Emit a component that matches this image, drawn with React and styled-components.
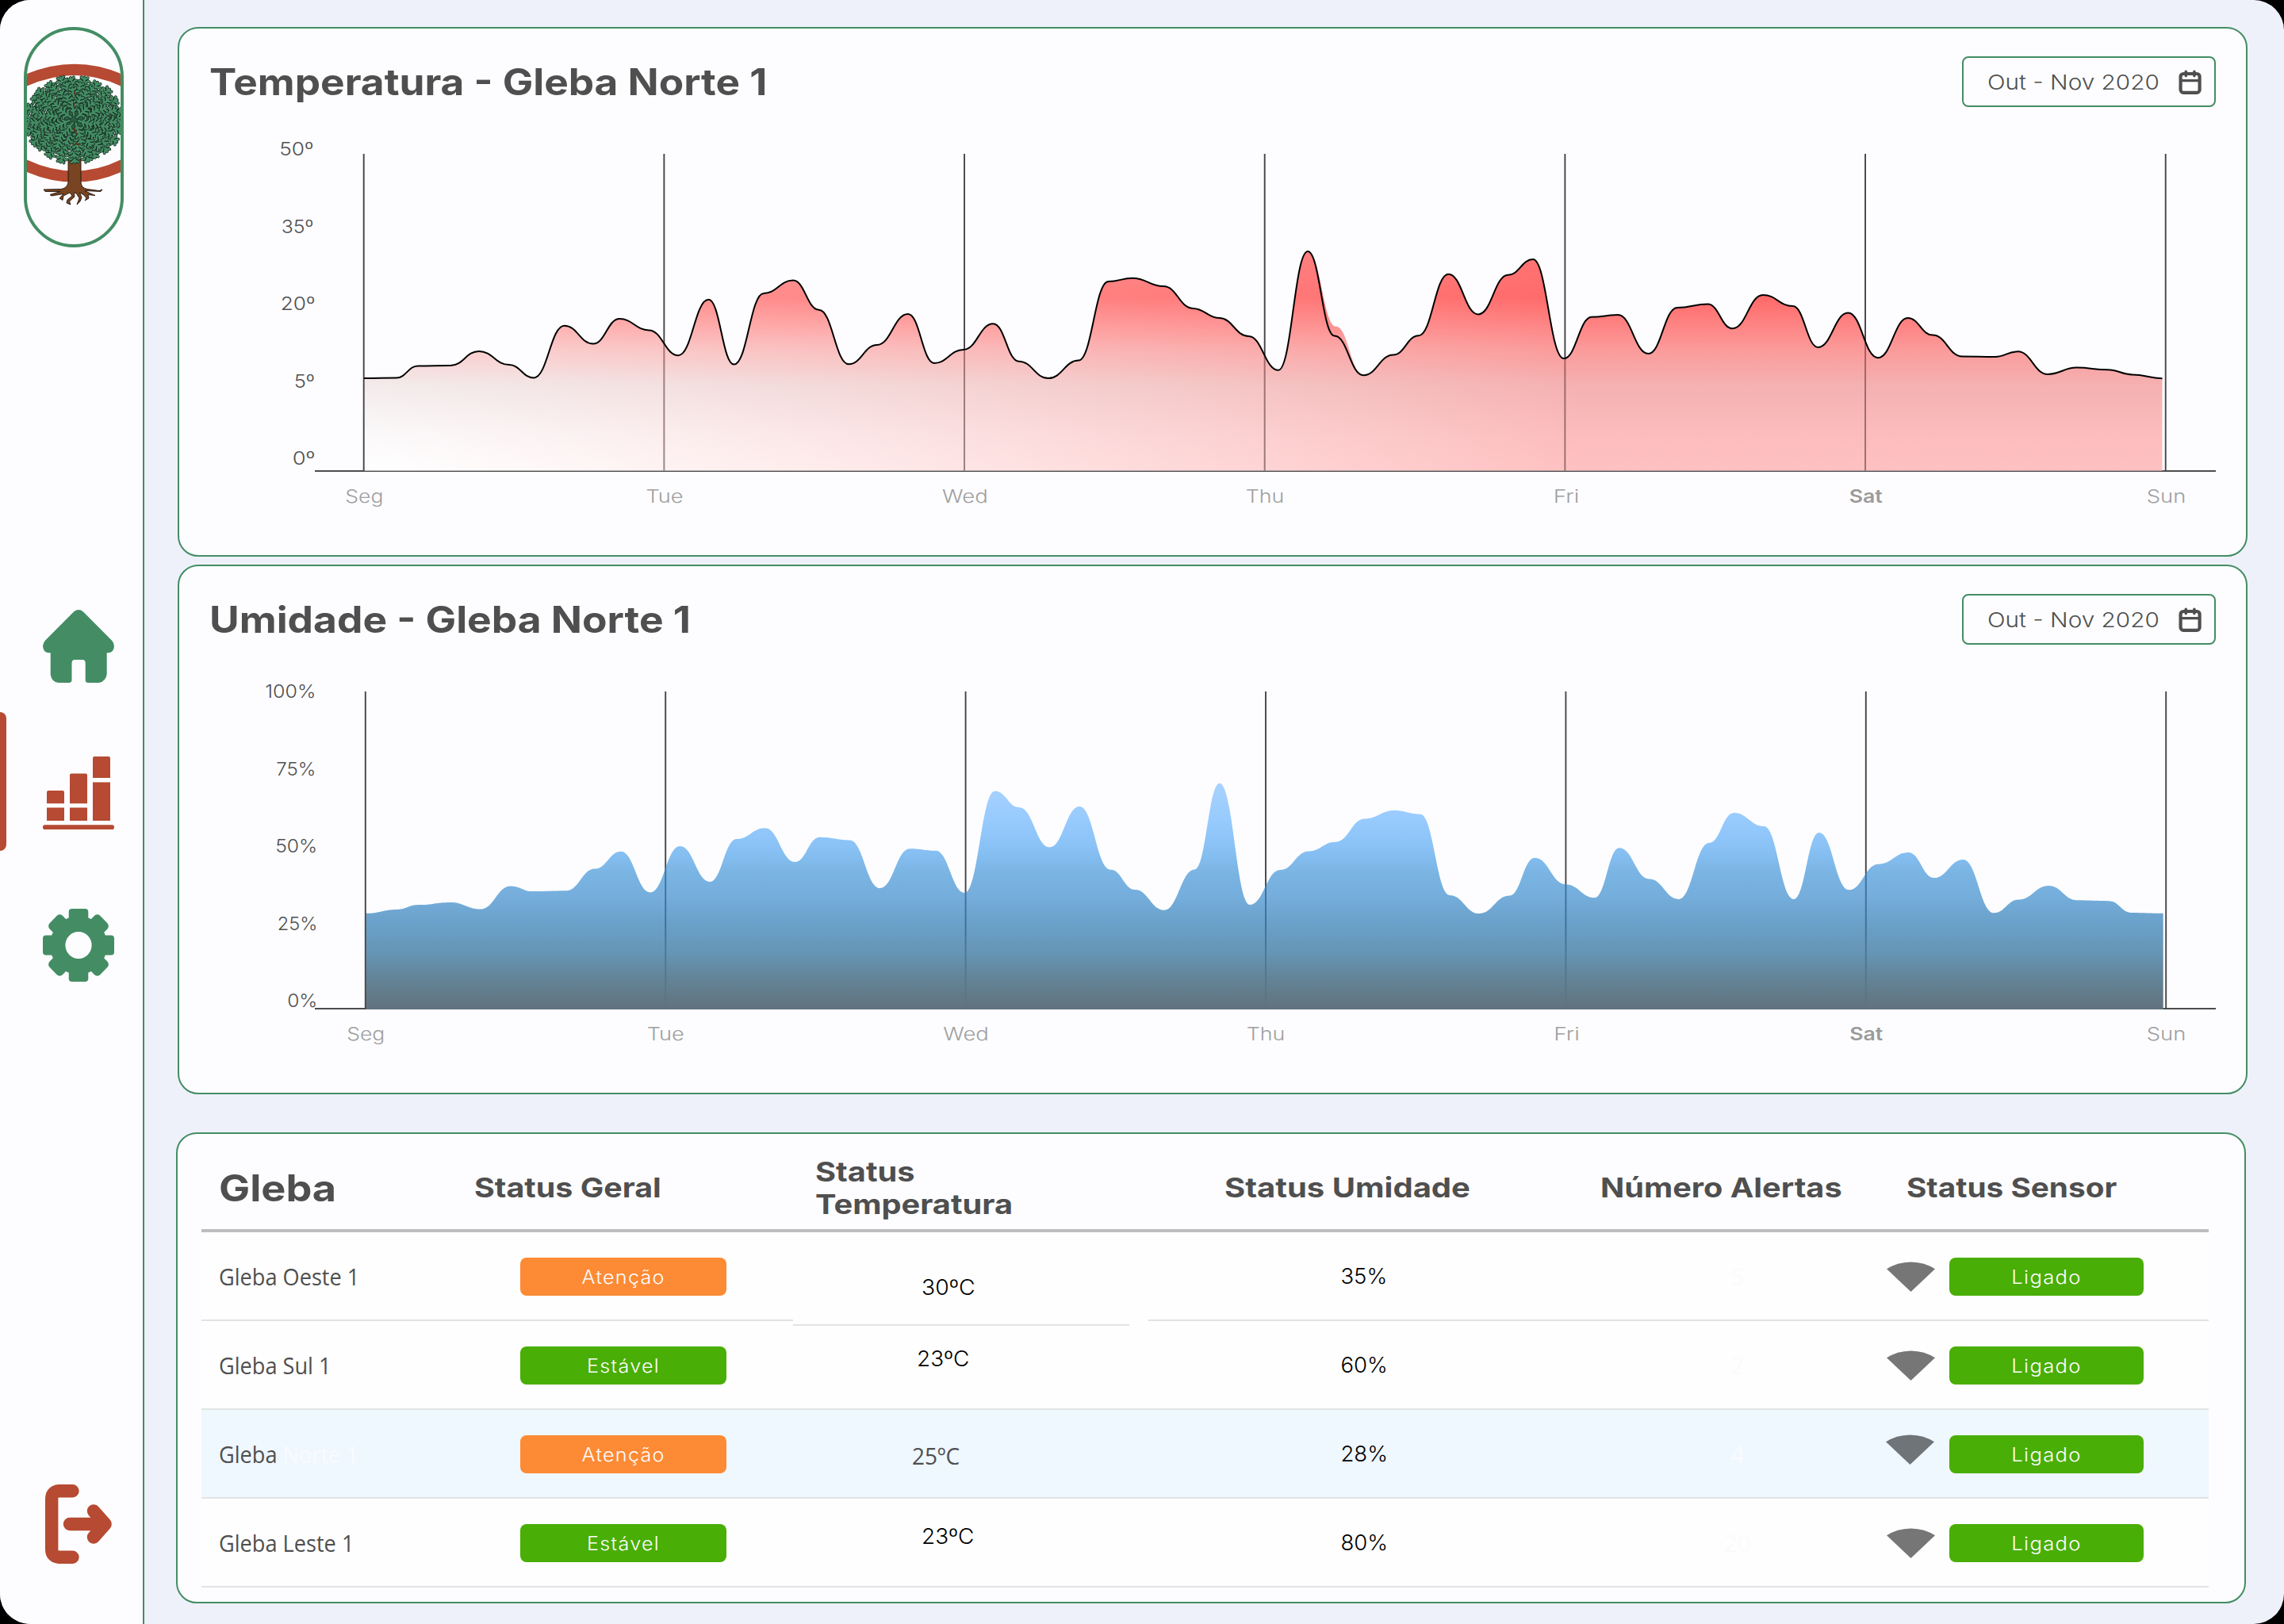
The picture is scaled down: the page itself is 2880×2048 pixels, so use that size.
import React from "react";
import styled, { createGlobalStyle, css } from "styled-components";

const GREEN = "#448d64";
const RED = "#b64a32";
const INK = "#4f4f4f";

const GlobalStyle = createGlobalStyle`
  html, body { margin: 0; padding: 0; background: #000; }
  body { font-family: Inter, "Liberation Sans", sans-serif; color: ${INK}; }
  *, *::before, *::after { box-sizing: border-box; }
  svg { display: block; flex: none; }
`;

/* ---------- page ---------- */

const Page = styled.div`
  display: flex;
  width: 2880px;
  height: 2048px;
  border-radius: 38px;
  overflow: hidden;
  background: #eef1fa;
`;

const Sidebar = styled.aside`
  display: flex;
  flex-direction: column;
  flex: none;
  width: 182px;
  padding-top: 34px;
  background: #fdfdff;
  border-right: 2px solid ${GREEN};
`;

const LogoFrame = styled.div`
  width: 126px;
  height: 278px;
  margin-left: 30px;
  border: 4px solid ${GREEN};
  border-radius: 63px;
  overflow: hidden;
`;

const Nav = styled.nav`
  display: flex;
  flex-direction: column;
  flex: 1;
  padding-top: 457px;
`;

const NavItem = styled.a`
  display: flex;
  align-items: flex-start;
  height: ${(p) => p.$height}px;
  margin-bottom: ${(p) => p.$after}px;
  padding-left: ${(p) => (p.$active ? 0 : p.$left || 54)}px;
  color: ${(p) => (p.$red ? RED : GREEN)};
`;

const ActiveMark = styled.span`
  width: 8px;
  height: 100%;
  margin-right: 46px;
  border-radius: 0 8px 8px 0;
  background: ${RED};
`;

const ActiveIcon = styled.span`
  padding-top: 56px;
`;

const Main = styled.main`
  display: flex;
  flex-direction: column;
  flex: 1;
  padding: 34px 46px 0 42px;
`;

/* ---------- shared text ---------- */

const Wide = styled.span`
  display: inline-block;
  transform: scaleX(${(p) => p.$x || 1});
  transform-origin: ${(p) => (p.$center ? "50%" : "0")} 50%;
  white-space: pre;
`;

/* ---------- chart cards ---------- */

const Card = styled.section`
  display: flex;
  flex-direction: column;
  flex: none;
  width: 2610px;
  height: 668px;
  margin-bottom: 10px;
  border: 2px solid ${GREEN};
  border-radius: 26px;
  background: #fdfdff;
  overflow: hidden;
`;

const CardHeader = styled.header`
  display: flex;
  align-items: center;
  justify-content: space-between;
  flex: none;
  padding: 35px 38px 0 38px;
`;

const CardTitle = styled.h2`
  margin: 0;
  font-size: 46px;
  font-weight: 700;
  line-height: 56px;
`;

const DateButton = styled.button`
  display: flex;
  align-items: center;
  justify-content: space-between;
  width: 320px;
  height: 64px;
  padding: 1px 15px 0 30px;
  border: 2px solid ${GREEN};
  border-radius: 8px;
  background: transparent;
  color: ${INK};
  font: 350 26px/40px Inter, "Liberation Sans", sans-serif;
`;

/* ---------- table ---------- */

const TableCard = styled(Card)`
  height: 594px;
  margin: 38px 0 0 -2px;
  padding-left: 30px;
`;

const HeadRow = styled.div`
  display: grid;
  grid-template-columns: 340px 406px 448px 544px 380px 413px;
  align-items: center;
  width: 2531px;
  height: 124px;
  padding-top: 17px;
  border-bottom: 4px solid #bdbdbd;
`;

const HeadCell = styled.div`
  padding-left: ${(p) => p.$pad}px;
  font-size: ${(p) => (p.$big ? 46 : 34.5)}px;
  font-weight: 700;
  line-height: 40.5px;
`;

const Row = styled.div`
  display: grid;
  grid-template-columns: 340px 406px 424px 24px 544px 380px 413px;
  width: 2531px;
  height: 112px;
  background: ${(p) => (p.$selected ? "#eff7ff" : "#fefefe")};
`;

const Cell = styled.div`
  display: flex;
  align-items: center;
  height: 112px;
  padding-top: 2px;
  padding-left: ${(p) => p.$pad || 0}px;
  border-bottom: 2px solid #e2e3e4;
  ${(p) =>
    p.$center &&
    css`
      justify-content: center;
    `}
`;

const Gap = styled.div`
  height: 112px;
  border-bottom: 2px solid ${(p) => (p.$open ? "transparent" : "#e2e3e4")};
`;

const TempCell = styled(Cell)`
  position: relative;
  z-index: 1;
  align-items: flex-start;
  padding-top: ${(p) => p.$top}px;
  ${(p) =>
    p.$low &&
    css`
      height: 118px;
      background: #fefefe;
    `}
`;

const Name = styled.span`
  font: 400 29.5px/40px "Open Sans", "Noto Sans", sans-serif;
  color: ${INK};
  white-space: pre;
`;

const Faint = styled.span`
  color: ${(p) => (p.$selected ? "#f9fbff" : "#fbfbfb")};
`;

const Value = styled.span`
  font-size: 27px;
  font-weight: 350;
  line-height: 40px;
  color: #000;
`;

const Badge = styled.span`
  display: flex;
  align-items: center;
  justify-content: center;
  width: ${(p) => p.$width}px;
  height: 48px;
  border-radius: 8px;
  background: ${(p) => (p.$warn ? "#fd8a34" : "#49ae05")};
  color: #fdfdff;
  font-size: 23.5px;
  font-weight: 350;
  letter-spacing: 1.2px;
`;

const Signal = styled.span`
  margin: ${(p) => (p.$raised ? "-12px 19px 0 -1px" : "0 18px 0 0")};
  color: ${(p) => (p.$raised ? "#6f7478" : "#767676")};
`;

/* ---------- icons ---------- */

const NavIcon = styled.svg.attrs({
  width: 90,
  height: 92,
  preserveAspectRatio: "none",
  fill: "currentColor",
})``;

const HomeIcon = () => (
  <NavIcon viewBox="0 0 90 86">
    <path d="M39 2.3Q45-2.3 51 2.3L87.3 36.4Q90 39.5 90 43Q89.5 50 83 50.7H80.7V76Q79.5 84.5 71 86H57Q53.7 86 53.7 82.5V63Q53.7 59 50 59H40.5Q36.5 59 36.5 63V82.5Q36.5 86 33 86H19.5Q11 85 9.7 76.5V50.7H7Q.5 50 0 43Q0 39.5 2.7 36.4Z" />
  </NavIcon>
);

const BarsIcon = () => (
  <NavIcon viewBox="0 0 90 86">
    <path d="M5 55.3V42.3Q5 40.3 7 40.3H25Q27 40.3 27 42.3V55.3ZM5 60.3H27V75.7H5Z" />
    <path d="M34 55.3V22Q34 20 36 20H54Q56 20 56 22V55.3ZM34 60.3H56V75.7H34Z" />
    <path d="M63 25.3V2Q63 0 65 0H83Q85 0 85 2V25.3ZM63 30.3H85V75.7H63Z" />
    <rect y="80.7" width="90" height="5.3" rx="2.65" />
  </NavIcon>
);

const GearIcon = () => (
  <NavIcon viewBox="-45 -45 90 90">
    <circle r="36" />
    <rect x="-12.3" y="-45" width="24.6" height="90" rx="4" />
    <rect x="-45" y="-12.3" width="90" height="24.6" rx="4" />
    <g transform="rotate(45)">
      <rect x="-11.5" y="-45" width="23" height="90" rx="5" />
      <rect x="-45" y="-11.5" width="90" height="23" rx="5" />
    </g>
    <circle r="16.6" fill="#fdfdff" />
  </NavIcon>
);

const ExitIcon = () => (
  <svg
    width="84"
    height="100"
    viewBox="0 0 84 100"
    fill="none"
    stroke="currentColor"
    strokeWidth="16.4"
    strokeLinecap="round"
    strokeLinejoin="round"
  >
    <path d="M34.500 8.200H17.500Q8.200 9 8.200 18V82Q8.200 91 17.500 91.800H34.500" />
    <path d="M31 50H62" />
    <path d="M61 33.5L75.6 50L61 66.5" />
    <path d="M61 40L72 50L61 60Z" fill="currentColor" strokeWidth="4" />
  </svg>
);

const CalendarIcon = () => (
  <svg width="30" height="32" viewBox="0 0 30 32" fill="none" stroke="currentColor" strokeLinecap="round">
    <rect x="2.6" y="5" width="24" height="23.8" rx="3.6" strokeWidth="4.2" />
    <path d="M3 13.6H26" strokeWidth="3.4" />
    <path d="M9.3 2.4V7.6M19.9 2.4V7.6" strokeWidth="3.6" />
  </svg>
);

const SignalIcon = () => (
  <svg width="61" height="38" viewBox="0 0 61 38" fill="currentColor">
    <path d="M30.5 38L0 9.3Q13 0.6 30.5 0.4Q48 0.6 61 9.3Z" />
  </svg>
);

/* ---------- tree logo ---------- */

const FROND =
  "M0 2V-16M0-3l-4.5-3.2M0-3l4.5-3.2M0-8l-5-3.6M0-8l5-3.6M0-12.5l-4.2-3.2M0-12.5l4.2-3.2M-4.5-6.2l-2 .8M4.5-6.2l2 .8M-5-11.6l-1.8 1M5-11.6l1.8 1";

const RINGS = [
  { count: 24, rx: 46, ry: 38.5, turn: 0 },
  { count: 21, rx: 38, ry: 31, turn: 8 },
  { count: 17, rx: 28, ry: 23, turn: 2 },
  { count: 12, rx: 18, ry: 15, turn: 12 },
  { count: 7, rx: 7, ry: 7, turn: 0 },
];

const fronds = RINGS.flatMap((ring, level) =>
  Array.from({ length: ring.count }, (_, i) => {
    const deg = ring.turn + (i * 360) / ring.count;
    const rad = (deg * Math.PI) / 180;
    const lean = ((i * 37 + level * 17) % 31) - 15;
    const shift = ((i * 13 + level * 7) % 5) / 2 - 1;
    return {
      key: `${level}-${i}`,
      x: 63 + Math.sin(rad) * (ring.rx + shift),
      y: 117 - Math.cos(rad) * (ring.ry + shift),
      turn: deg + lean,
    };
  })
);

const TreeLogo = () => (
  <svg width="118" height="270" viewBox="4 4 118 270" fill="none">
    <path d="M-4 70.5Q30 53.8 64 53.8Q98 53.8 130 70.5" stroke={RED} strokeWidth="14.3" />
    <path d="M-4 171.5Q30 188.7 64 188.7Q98 188.7 130 171.5" stroke={RED} strokeWidth="14.3" />
    <path
      d="M56 166V196Q55 203 47 204.5L25 205L27 207.5L46 207.5L33 211.5L35 213L50 210.5L45 216L49 218.500L50 213L58 209L61 213L55 218L54 222L59 224L57.500 220L64 214L63.500 209.500L66 209.500L70 216L67 224L71 220L73 215L70.500 209L76 212L79 216L77 219L82 216L81 211.500L90 212.500L83 209.500L77 206.500L97 207.500L99 205L95 206.500L80 204.500Q72.500 203 72 196V166Z"
      fill="#784421"
      stroke="#22150d"
      strokeWidth="0.9"
      strokeLinejoin="round"
    />
    <ellipse cx="63" cy="116" rx="36" ry="30" fill="#2a5f43" />
    <g strokeLinecap="round">
      {fronds.map((f) => (
        <g key={f.key} transform={`translate(${f.x.toFixed(1)} ${f.y.toFixed(1)}) rotate(${f.turn.toFixed(1)})`}>
          <path d={FROND} stroke="#13251c" strokeWidth="3.8" />
          <path d={FROND} stroke="#448d64" strokeWidth="2.5" />
        </g>
      ))}
    </g>
    <path d="M64 82v3M63 95v6M62 127l3 3 1 5M65 146l5 3" stroke="#6b2d16" strokeWidth="1.8" />
  </svg>
);

/* ---------- charts ---------- */

const TEMPERATURE = [
  [459, 477], [500, 476.4], [527, 461.4], [568, 461], [604, 442.9], [642, 460], [673, 476.4], [711.6, 410.7],
  [748, 433.6], [781.2, 402.1], [818.2, 416.4], [855.3, 448.2], [893.5, 377.8], [925.5, 459.6], [963, 370],
  [1000, 353.6], [1032.6, 390.7], [1070.3, 459.3], [1105.8, 435], [1145, 396], [1178, 457.9], [1214.7, 441],
  [1252.3, 408.2], [1284.8, 455.7], [1321.9, 477.1], [1360, 454.6], [1397.6, 355], [1428, 350.7], [1467.2, 361.1],
  [1504.3, 388.9], [1537.4, 401], [1574.4, 423.9], [1612, 466.8], [1649, 317.1], [1682.7, 423.5], [1719.2, 473.2],
  [1756.8, 447.5], [1788.8, 423.2], [1826.4, 345.7], [1864, 396.4], [1901.6, 346.8], [1933, 327.1], [1971.8, 452.1],
  [2007.1, 399.8], [2040.1, 397.1], [2078.5, 446], [2115, 387.9], [2153.4, 383.5], [2184.6, 414.3], [2223, 372],
  [2260.7, 386.1], [2292.5, 438], [2330.3, 394.5], [2368, 451.2], [2405.8, 401.1], [2437, 422.6], [2474.2, 449.5],
  [2515.5, 449.9], [2544.3, 443.3], [2582, 471.9], [2618.6, 463.6], [2657.6, 466.2], [2688.8, 472.4], [2726.5, 477.2],
];

const TEMPERATURE_AREA = TEMPERATURE.map(([x, y]) => (x === 1682.7 ? [1684.5, 411.8] : [x, y]));

const HUMIDITY = [
  [461.3, 1151.8], [500.6, 1146.9], [527.5, 1141.1], [568, 1137.9], [606.1, 1146.4], [643.7, 1117.4], [671.8, 1124.1],
  [713.9, 1123.2], [750.3, 1095.5], [782.9, 1073.7], [820, 1125.4], [857.5, 1067], [895.1, 1112], [928.8, 1058],
  [964.7, 1044.2], [1002.3, 1087], [1033.7, 1055.8], [1071.3, 1059.4], [1109.7, 1120], [1147.3, 1070.3],
  [1179.9, 1072.8], [1216.4, 1126], [1254.5, 997.5], [1285.4, 1018.2], [1323.6, 1068.5], [1361.2, 1017.1],
  [1400.4, 1096.8], [1431.3, 1122.1], [1467.8, 1147.8], [1506.5, 1096.4], [1537.9, 987.8], [1576.1, 1141],
  [1614.3, 1097.1], [1650.2, 1073.5], [1683.9, 1061.8], [1720.9, 1032.5], [1757.9, 1022.1], [1791, 1026.8],
  [1828.1, 1128.9], [1865.1, 1152.1], [1903.3, 1129.6], [1935.3, 1081.8], [1974.2, 1115.2], [2010.7, 1132.1],
  [2041.9, 1069.2], [2079.7, 1108.5], [2116.9, 1133.9], [2155.2, 1063], [2186.4, 1025], [2224.2, 1042],
  [2261.9, 1133.9], [2293.7, 1050], [2331.5, 1122.3], [2368.6, 1089.7], [2406.4, 1075], [2438.8, 1107.1],
  [2475.4, 1083.9], [2514.3, 1151.3], [2545.5, 1134.4], [2583.3, 1117], [2619.2, 1135.3], [2659.4, 1136.2],
  [2687.6, 1150.9], [2727.7, 1151.8],
];

/* Every reading is a flat step; the curve eases from one to the next. */
const curve = (points) =>
  points
    .map(([x, y], i) => {
      if (i === 0) return `M${x} ${y}`;
      const [px, py] = points[i - 1];
      const d = (x - px) * 0.45;
      return `C${(px + d).toFixed(1)} ${py} ${(x - d).toFixed(1)} ${y} ${x} ${y}`;
    })
    .join("");

const area = (points, base) => `${curve(points)}V${base}H${points[0][0]}Z`;

const DAYS = [
  ["Seg", 45.5], ["Tue", 44.5], ["Wed", 55], ["Thu", 46], ["Fri", 30], ["Sat", 39.5], ["Sun", 47],
];

const AxisText = styled.text`
  font-family: Inter, "Liberation Sans", sans-serif;
  font-size: 23.3px;
  font-weight: 350;
  fill: #505050;
`;

const DayText = styled(AxisText)`
  font-size: 22.8px;
  font-weight: ${(p) => (p.$strong ? 600 : 350)};
  fill: ${(p) => (p.$strong ? "#9b9b9b" : "#a0a0a0")};
`;

function Plot({ id, top, first, step, days, ticks, points, fillPoints, outline, fills, overlay }) {
  const head = top + 59;
  const base = top + 459;
  const shape = area(fillPoints || points, base + (outline ? -0.5 : 1));
  const lines = DAYS.map((_, i) => first + step * i);
  return (
    <svg width="2606" height="565" viewBox={`226 ${top} 2606 565`}>
      <defs>
        {fills.map((f, i) => (
          <linearGradient key={i} id={`${id}${i}`} gradientUnits="userSpaceOnUse" {...f.axis}>
            {f.stops.map(([offset, color, opacity = 1]) => (
              <stop key={offset} offset={offset} stopColor={color} stopOpacity={opacity} />
            ))}
          </linearGradient>
        ))}
        <linearGradient id={`${id}line`} gradientUnits="userSpaceOnUse" x1="0" x2="0" y1={base - 240} y2={base}>
          {overlay.map(([offset, color, opacity]) => (
            <stop key={offset} offset={offset} stopColor={color} stopOpacity={opacity} />
          ))}
        </linearGradient>
        <clipPath id={`${id}clip`}>
          <path d={shape} />
        </clipPath>
      </defs>
      <path d={`M397 ${base}H2794`} stroke="#4c4c4e" strokeWidth="2.2" />
      {lines.slice(1).map((x) => (
        <path key={x} d={`M${x} ${head}V${base}`} stroke="#454547" strokeWidth="1.9" />
      ))}
      {fills.map((f, i) => (
        <path key={i} d={shape} fill={`url(#${id}${i})`} />
      ))}
      <g clipPath={`url(#${id}clip)`}>
        {lines.slice(1).map((x) => (
          <rect key={x} x={x - 1} y={head} width="2" height="400" fill={`url(#${id}line)`} />
        ))}
      </g>
      <path d={`M${first} ${head}V${base}`} stroke="#454547" strokeWidth="1.9" />
      {outline && <path d={curve(points)} fill="none" stroke="#000" strokeWidth="2" />}
      {ticks.map(([label, x, width, y]) => (
        <AxisText key={label} x={x - 1.3} y={y} textLength={width + 2.6} lengthAdjust="spacingAndGlyphs">
          {label}
        </AxisText>
      ))}
      {DAYS.map(([day, width], i) => (
        <DayText
          key={day}
          $strong={day === "Sat"}
          x={days[i] - 1.3}
          y={top + 498.5}
          textLength={width + 2.6}
          lengthAdjust="spacingAndGlyphs"
        >
          {day}
        </DayText>
      ))}
    </svg>
  );
}

const RED_FILLS = [
  {
    axis: { x1: 0, x2: 0, y1: 317, y2: 593 },
    stops: [
      [0, "#ff7777"], [0.21, "#ff6868"], [0.337, "#fe9595"], [0.446, "#f8bcbc"], [0.61, "#eee3e3"],
      [0.84, "#faf7f8"], [1, "#ffffff"],
    ],
  },
  {
    axis: { x1: 459, x2: 1990, y1: 0, y2: 0 },
    stops: [[0, "#ffffff", 0.3], [1, "#ff6b6b", 0.42]],
  },
];

const BLUE_FILLS = [
  {
    axis: { x1: 0, x2: 0, y1: 988, y2: 1272 },
    stops: [
      [0, "#a8d3ff"], [0.15, "#99cbfe"], [0.27, "#8bc3f7"], [0.4, "#7ab4e3"], [0.5, "#75aedc"],
      [0.61, "#6ba2cb"], [0.75, "#6695b5"], [0.86, "#638599"], [1, "#61727d"],
    ],
  },
];

function ChartCard({ title, stretch, children }) {
  return (
    <Card>
      <CardHeader>
        <CardTitle>
          <Wide $x={stretch}>{title}</Wide>
        </CardTitle>
        <DateButton>
          <Wide $x={1.143}>Out - Nov 2020</Wide>
          <CalendarIcon />
        </DateButton>
      </CardHeader>
      {children}
    </Card>
  );
}

/* ---------- table data ---------- */

const HEADINGS = [
  { label: "Gleba", pad: 22, x: 1.135, big: true },
  { label: "Status Geral", pad: 4, x: 1.142 },
  { label: "Status\nTemperatura", pad: 28, x: 1.153 },
  { label: "Status Umidade", pad: 96, x: 1.16 },
  { label: "Número Alertas", pad: 26, x: 1.15 },
  { label: "Status Sensor", pad: 32, x: 1.123 },
];

const ROWS = [
  { name: "Oeste 1", status: "Atenção", temp: "30ºC", left: 162, top: 50, x: 1.05, low: true, hum: "35%", alerts: "5" },
  { name: "Sul 1", status: "Estável", temp: "23ºC", left: 156, top: 28, x: 1.035, hum: "60%", alerts: "2" },
  { name: "Norte 1", status: "Atenção", temp: "25ºC", left: 150, top: 38, plain: true, hum: "28%", alerts: "4", selected: true },
  { name: "Leste 1", status: "Estável", temp: "23ºC", left: 162, top: 28, x: 1.035, hum: "80%", alerts: "20" },
];

export default function App() {
  return (
    <>
      <GlobalStyle />
      <Page>
        <Sidebar>
          <LogoFrame>
            <TreeLogo />
          </LogoFrame>
          <Nav>
            <NavItem $height={92} $after={37}>
              <HomeIcon />
            </NavItem>
            <NavItem $height={175} $after={73} $active $red>
              <ActiveMark />
              <ActiveIcon>
                <BarsIcon />
              </ActiveIcon>
            </NavItem>
            <NavItem $height={92} $after={634}>
              <GearIcon />
            </NavItem>
            <NavItem $height={100} $after={0} $left={57} $red>
              <ExitIcon />
            </NavItem>
          </Nav>
        </Sidebar>

        <Main>
          <ChartCard title="Temperatura - Gleba Norte 1" stretch={1.116}>
            <Plot
              id="temp"
              top={135}
              first={458.7}
              step={378.67}
              points={TEMPERATURE}
              fillPoints={TEMPERATURE_AREA}
              outline
              fills={RED_FILLS}
              overlay={[[0, "#602020", 0.5], [1, "#4a3030", 0.55]]}
              days={[436.6, 815.8, 1189.4, 1572, 1960, 2333, 2708]}
              ticks={[
                ["50º", 353.5, 40.5, 196],
                ["35º", 356, 38, 293.5],
                ["20º", 355, 41, 391],
                ["5º", 372, 23.5, 488.5],
                ["0º", 370, 26, 586],
              ]}
            />
          </ChartCard>

          <ChartCard title="Umidade - Gleba Norte 1" stretch={1.119}>
            <Plot
              id="hum"
              top={813}
              first={460.8}
              step={378.4}
              points={HUMIDITY}
              fills={BLUE_FILLS}
              overlay={[[0, "#1d5080", 0.7], [0.55, "#1d4a70", 0.55], [1, "#1d3a50", 0]]}
              days={[438.5, 817, 1190.6, 1573, 1960.5, 2333.5, 2708]}
              ticks={[
                ["100%", 335.5, 61.5, 880],
                ["75%", 349.5, 47.5, 977.5],
                ["50%", 348.5, 50.5, 1075],
                ["25%", 351, 48, 1172.5],
                ["0%", 363.5, 35.5, 1270],
              ]}
            />
          </ChartCard>

          <TableCard>
            <HeadRow>
              {HEADINGS.map((h) => (
                <HeadCell key={h.label} $pad={h.pad} $big={h.big}>
                  {h.label.split("\n").map((line) => (
                    <div key={line}>
                      <Wide $x={h.x}>{line}</Wide>
                    </div>
                  ))}
                </HeadCell>
              ))}
            </HeadRow>
            {ROWS.map((r) => (
              <Row key={r.name} $selected={r.selected}>
                <Cell $pad={22}>
                  <Name>
                    <Wide $x={0.92}>
                      {"Gleba "}
                      {r.selected ? <Faint $selected>{r.name}</Faint> : r.name}
                    </Wide>
                  </Name>
                </Cell>
                <Cell $pad={62}>
                  <Badge $width={260} $warn={r.status === "Atenção"}>
                    <Wide $x={1.07} $center>{r.status}</Wide>
                  </Badge>
                </Cell>
                <TempCell $pad={r.left} $top={r.top} $low={r.low}>
                  {r.plain ? (
                    <Name>
                      <Wide $x={0.95}>{r.temp}</Wide>
                    </Name>
                  ) : (
                    <Value>
                      <Wide $x={r.x}>{r.temp}</Wide>
                    </Value>
                  )}
                </TempCell>
                <Gap $open={r.low} />
                <Cell $center>
                  <Value>
                    <Wide $x={1.02} $center>{r.hum}</Wide>
                  </Value>
                </Cell>
                <Cell $center $pad={18}>
                  <Name>
                    <Faint $selected={r.selected}>{r.alerts}</Faint>
                  </Name>
                </Cell>
                <Cell $pad={7}>
                  <Signal $raised={r.selected}>
                    <SignalIcon />
                  </Signal>
                  <Badge $width={245}>
                    <Wide $x={1.09} $center>Ligado</Wide>
                  </Badge>
                </Cell>
              </Row>
            ))}
          </TableCard>
        </Main>
      </Page>
    </>
  );
}
